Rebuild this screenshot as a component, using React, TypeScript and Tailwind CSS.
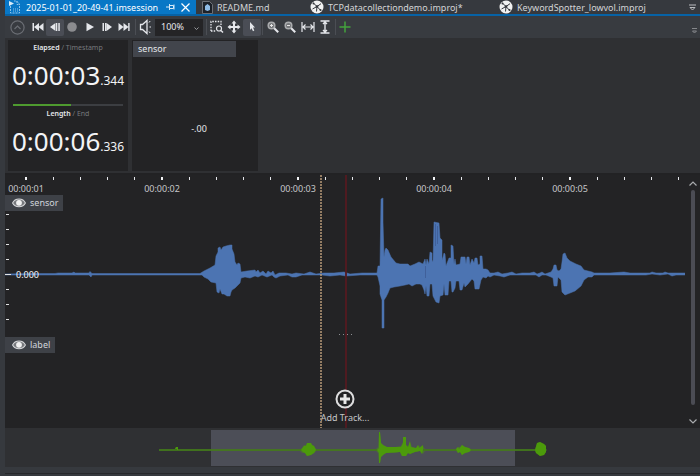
import type { ReactNode } from "react";

const SENSOR_TOP =
  "5,274 35,273.5 55,273.5 58,273 66,273 72,273 74,272 75,273 89,273 90,271.5 92,273.5 140,273.5 200,273.5 204,271 210,268 215,265 216,256 218,252 218,248 220,247 221,250 223,247 226,246 230,245 232,245 232,249 234,254 235,262 237,265 238,263 240,264 241,272 247,271 255,270 256,272 258,270 260,273 263,271 266,274 268,271 271,273 273,271 275,275 279,273 286,273 292,274 296,273 304,274 310,272 316,274 324,273 334,273 344,272 350,274 362,273 377,273 378,266 380,266 381,199 383,198 383,222 384,257 385,250 386,248 388,250 391,257 396,263 400,264 408,264 410,266 415,264 419,262 423,264 425,259 426,265 427,259 429,264 430,252 432,253 432,260 433,262 434,222 439,223 440,238 442,240 442,260 443,257 444,253 445,254 446,266 449,258 451,258 451,245 453,246 454,264 455,259 456,265 460,264 461,257 465,257 466,264 467,257 469,257 470,265 472,259 474,263 475,258 477,258 478,265 480,264 480,256 482,256 483,269 486,269 488,270 490,273 494,273 498,272 502,274 508,273 512,272 516,274 522,273 530,273 534,272 537,274 540,273 542,272 545,274 551,272 553,269 554,265 556,265 557,270 559,271 561,269 562,262 563,254 565,253 567,258 570,261 576,264 581,266 584,270 588,271 592,272 594,273 610,273 624,272 630,273 650,273 652,272 656,273 663,273 665,272 668,273 685,273";

const SENSOR_BOTTOM =
  "685,275 676,275 672,276 668,274 660,275 652,274 646,275 600,275 594,275 592,277 588,277 584,280 581,286 575,291 570,293 565,295 562,292 561,280 558,277 557,286 554,286 553,278 551,277 546,275 542,275 539,277 536,275 524,275 520,275 510,275 504,277 500,276 494,275 490,277 488,276 486,278 483,277 481,280 479,289 475,289 474,281 472,279 468,284 465,287 464,283 462,290 460,290 459,281 456,281 455,288 453,292 452,292 451,281 449,281 448,295 445,295 444,284 443,295 440,296 439,303 436,302 435,300 433,296 432,284 430,284 429,296 427,296 426,286 425,294 424,290 422,285 420,284 416,284 412,286 409,284 405,285 400,286 394,287 390,288 388,293 386,297 384,300 384,328 382,328 382,300 380,294 380,286 378,277 377,275 360,275 346,276 340,275 330,276 322,275 310,275 302,275 296,277 292,277 288,275 280,276 276,278 274,277 272,275 267,277 262,275 258,277 255,276 250,278 245,277 241,278 240,283 235,288 232,290 231,292 230,296 227,296 224,294 222,294 220,289 219,293 217,292 216,283 211,282 208,279 204,277 202,275 140,275 92,275 91,277 89,275 75,275 58,275 52,275 5,275";

const OVERVIEW_SHAPE =
  "159,449 175,449 176,447 178,447 178,449 301,449 304,445 306,445 307,443 311,443 312,445 314,446 316,449 376,449 378,447 379,432 380,432 381,443 383,445 386,447 395,447 401,446 403,442 403,437 406,437 406,445 408,447 410,442 412,447 416,448 419,445 420,448 423,446 425,449 456,449 458,447 460,447 462,445 465,447 469,448 471,449 535,449 537,443 540,442 544,444 546,446 546,452 544,455 540,456 536,453 535,451 471,451 469,452 465,453 462,455 460,452 458,453 456,451 425,451 423,454 420,451 415,452 410,454 408,453 406,456 402,456 400,452 395,453 386,453 383,455 381,457 380,463 379,463 378,453 376,451 316,451 314,453 311,455 307,456 305,453 302,453 300,451 159,451";

const TOOL = "grid h-[17px] place-items-center rounded-xs text-gray-200";

function Tool({ label, active, children }: { label: string; active?: boolean; children: ReactNode }) {
  return (
    <button type="button" aria-label={label} className={active ? `${TOOL} bg-[#4a4d55]` : TOOL}>
      <svg viewBox="0 0 16 16" className="size-4" fill="currentColor">
        {children}
      </svg>
    </button>
  );
}

function Separator() {
  return <span className="mx-px h-4 w-px shrink-0 bg-[#4b4e54]" />;
}

function ProjectIcon() {
  return (
    <svg viewBox="0 0 14 14" className="size-[14px] shrink-0">
      <circle cx="7" cy="7" r="6.5" fill="#f1f1f1" />
      <g stroke="#33363b" strokeWidth="1" fill="none">
        <path d="M7 6.500 3.300 3M7 6.500 11 3.700M7 6.500 2.500 9M7 6.500l3.700 4M7 6.500 6.500 11.500" />
      </g>
      <g fill="#33363b">
        <circle cx="7" cy="6.500" r="1.300" />
        <circle cx="3.500" cy="3.500" r="1" />
        <circle cx="10.500" cy="10" r="1" />
      </g>
    </svg>
  );
}

function Tab({ icon, title, className }: { icon: ReactNode; title: string; className: string }) {
  return (
    <button type="button" className={`flex shrink-0 items-center gap-1 pl-1.5 text-left ${className}`}>
      {icon}
      <span className="whitespace-nowrap">{title}</span>
    </button>
  );
}

function TabBar() {
  return (
    <nav className="flex h-4 items-center overflow-hidden border-b-2 border-[#0762a5] text-[9px] leading-[13px] text-[#d3d4d6]">
      <div className="flex h-full w-[191px] shrink-0 items-center bg-[#0877c6] pl-1 text-white">
        <button type="button" className="flex flex-1 items-center gap-1 text-left">
          <svg viewBox="0 0 13 14" className="h-[14px] w-[13px]" fill="none" stroke="#8fc4e8">
            <path d="M1.500 6v7h9V4l-3-3H5M8 1v3.500h3" strokeDasharray="2 1" />
            <path d="M0 1l5 2.500L0 6z" fill="#d9ecf8" stroke="none" />
            <path d="M4 9h5M4 11h5" strokeDasharray="1 1" />
          </svg>
          <span className="whitespace-nowrap">2025-01-01_20-49-41.imsession</span>
        </button>
        <button type="button" aria-label="Pin tab" className="mr-1.5">
          <svg viewBox="0 0 9 8" className="h-2 w-[9px]" fill="none" stroke="#d5e9f7">
            <path d="M0 4h3M3.500 1v6M3.500 2.500h4v3h-4M8 1.500v5" />
          </svg>
        </button>
        <button type="button" aria-label="Close tab" className="mr-1.5">
          <svg viewBox="0 0 9 9" className="size-[9px]" fill="none" stroke="white" strokeWidth="1.200">
            <path d="M.5.5l8 8M8.500.5l-8 8" />
          </svg>
        </button>
      </div>
      <Tab
        title="README.md"
        className="w-[108px]"
        icon={
          <svg viewBox="0 0 11 13" className="h-[13px] w-[11px]">
            <path d="M.5.500h7l3 3v9H.5z" fill="#1c2128" stroke="#6d7076" />
            <path d="M3 5l2.500-2L8 5v4l-2.500 1L3 9z" fill="#8fbce6" />
          </svg>
        }
      />
      <Tab title="TCPdatacollectiondemo.improj*" className="w-[189px]" icon={<ProjectIcon />} />
      <Tab title="KeywordSpotter_lowvol.improj" className="w-[160px]" icon={<ProjectIcon />} />
      <button type="button" aria-label="More tabs" className="mr-1 ml-auto">
        <svg viewBox="0 0 7 7" className="size-[7px]" fill="none" stroke="#b9bbbe">
          <path d="M0 1h7M1 3.500h5L3.500 6z" />
        </svg>
      </button>
    </nav>
  );
}

function Toolbar() {
  return (
    <div className="flex h-[22px] items-center bg-[#383b40]">
      <div className="grid w-6 place-items-center">
        <button type="button" aria-label="Collapse panel">
          <svg viewBox="0 0 15 15" className="size-[15px]" fill="none" stroke="#6b6e74" strokeWidth="1.200">
            <circle cx="7.500" cy="7.500" r="6.600" />
            <path d="M4.500 9l3-3 3 3" />
          </svg>
        </button>
      </div>
      <div className="mr-px grid w-[104px] grid-cols-6">
        <Tool label="Go to start">
          <path d="M2.500 4H4v8H2.500zM4 8l5-4v8zM8.500 8l5-4v8z" />
        </Tool>
        <Tool label="Step back" active>
          <path d="M3 8l5.500-4v8zM9 4h1.300v8H9zM11.300 4h1.500v8h-1.500z" />
        </Tool>
        <Tool label="Record">
          <circle cx="8" cy="8" r="4.800" fill="#8b8c8f" />
        </Tool>
        <Tool label="Play">
          <path d="M4.500 3.700L12 8l-7.500 4.300z" />
        </Tool>
        <Tool label="Step forward">
          <path d="M3.500 4H5v8H3.500zM6 4h1.300v8H6zM7.500 4l5.500 4-5.500 4z" />
        </Tool>
        <Tool label="Go to end">
          <path d="M2.500 4l5 4-5 4zM7.500 4l5 4-5 4zM12.200 4h1.400v8h-1.400z" />
        </Tool>
      </div>
      <Separator />
      <Tool label="Sound">
        <path d="M3.500 5.500h2l4.500-4v13l-4.500-4h-2z" fill="none" stroke="currentColor" strokeWidth="1.300" />
        <path d="M12 3.500l1.200-1.500M12.500 8H14M12 12.500l1.200 1.500" fill="none" stroke="currentColor" />
      </Tool>
      <div className="relative mx-0.5">
        <select
          aria-label="Playback speed"
          defaultValue="100%"
          className="block h-[17px] w-12 appearance-none bg-[#242426] pl-1.5 text-[9px] leading-4 text-gray-200"
        >
          <option>100%</option>
        </select>
        <svg viewBox="0 0 5 4" className="pointer-events-none absolute top-2 right-1 h-1 w-[5px]" fill="none" stroke="#96989c">
          <path d="M.5.500l2 2 2-2" />
        </svg>
      </div>
      <Separator />
      <div className="grid w-[53px] grid-cols-3">
        <Tool label="Select region">
          <path d="M2 12V2.500h10V7M2 12h5" fill="none" stroke="currentColor" strokeWidth="1.300" strokeDasharray="1.500 1.200" />
          <circle cx="10" cy="9.500" r="2.500" fill="none" stroke="currentColor" strokeWidth="1.200" />
          <path d="M12 11.500l2 2" stroke="currentColor" strokeWidth="1.500" />
        </Tool>
        <Tool label="Pan">
          <path d="M8 1.500l2.500 3H9v2.500h2.500V5.500l3 2.500-3 2.500V9H9v2.500h1.500l-2.500 3-2.500-3H7V9H4.500v1.500l-3-2.500 3-2.500V7H7V4.500H5.500z" />
        </Tool>
        <Tool label="Pointer" active>
          <path d="M6 3l5 5.500H9l1.300 3-1.300.7L7.500 9.300 6 11z" />
        </Tool>
      </div>
      <Separator />
      <div className="grid w-[70px] grid-cols-4">
        <Tool label="Zoom in">
          <circle cx="6.500" cy="6.500" r="3.300" fill="#77797c" stroke="#aaacae" strokeWidth="1.500" />
          <path d="M5 6.500h3M6.500 5v3" stroke="#e5e5e5" />
          <path d="M9.200 9.200l4 4" stroke="currentColor" strokeWidth="2" />
        </Tool>
        <Tool label="Zoom out">
          <circle cx="6.500" cy="6.500" r="3.300" fill="#77797c" stroke="#aaacae" strokeWidth="1.500" />
          <path d="M5 6.500h3" stroke="#e5e5e5" />
          <path d="M9.200 9.200l4 4" stroke="currentColor" strokeWidth="2" />
        </Tool>
        <Tool label="Fit width">
          <path d="M2 3v10M14 3v10M3 8h10M5.500 5.500L3 8l2.500 2.500M10.500 5.500L13 8l-2.500 2.500" fill="none" stroke="currentColor" strokeWidth="1.200" />
        </Tool>
        <Tool label="Fit height">
          <path d="M3.500 2h9M3.500 14h9M8 3v10M6 5l2-2 2 2M6 11l2 2 2-2" fill="none" stroke="currentColor" strokeWidth="1.400" />
        </Tool>
      </div>
      <Separator />
      <Tool label="Add">
        <path d="M8 2.500v11M2.500 8h11" fill="none" stroke="#43a33c" strokeWidth="1.500" />
      </Tool>
      <button type="button" aria-label="Toolbar options" className="mt-2 mr-[3px] ml-auto">
        <svg viewBox="0 0 5 6" className="h-1.5 w-[5px]" fill="none" stroke="#85878b">
          <path d="M0 .5h5M.5 3h4l-2 2z" />
        </svg>
      </button>
    </div>
  );
}

function Clock({ name, alt, main, fraction }: { name: string; alt: string; main: string; fraction: string }) {
  return (
    <div className="h-[64px]">
      <p className="text-center text-[7px] leading-4 text-[#77797d]">
        <span className="font-semibold text-gray-200">{name}</span> / {alt}
      </p>
      <p className="flex items-baseline justify-center leading-[38px] text-gray-100">
        <span className="text-[26px]">{main}</span>
        <span className="text-[12px]">{fraction}</span>
      </p>
    </div>
  );
}

function Panels() {
  return (
    <div className="flex h-[137px] gap-1 border-b-2 border-[#222224] bg-[#2f3033] px-[3px] pt-0.5 pb-0.5">
      <section className="w-[120px] bg-[#232325] px-[5px]">
        <Clock name="Elapsed" alt="Timestamp" main="0:00:03" fraction=".344" />
        <div className="h-0.5 bg-[#3c3e42]">
          <div className="h-full w-[53%] bg-[#4e9a2f]" />
        </div>
        <Clock name="Length" alt="End" main="0:00:06" fraction=".336" />
      </section>
      <section className="flex w-[126px] flex-col bg-[#232325] p-px text-[9px] text-gray-200">
        <h2 className="h-4 w-[103px] bg-[#42454c] pl-[5px] leading-4">sensor</h2>
        <p className="mt-16 pl-2 text-center leading-4">-.00</p>
      </section>
    </div>
  );
}

const MARKS = ["00:00:01", "00:00:02", "00:00:03", "00:00:04", "00:00:05", ""];

function Ruler() {
  return (
    <div className="flex h-5 overflow-hidden pt-0.5">
      {MARKS.map((mark, i) => (
        <div key={i} className={i === 0 ? "-ml-[47px] w-[136px] shrink-0" : "w-[136px] shrink-0"}>
          <div className="grid h-[5px] grid-cols-5 justify-items-center">
            {[0, 1, 2, 3, 4].map((n) => (
              <span key={n} className={n === 2 ? "h-[3px] w-0.5 bg-gray-100" : "h-[3px] w-px bg-gray-200"} />
            ))}
          </div>
          <p className="text-center text-[9px] leading-[13px] text-[#c6c7c9]">{mark}</p>
        </div>
      ))}
    </div>
  );
}

function TrackBadge({ name }: { name: string }) {
  return (
    <button type="button" className="flex h-4 items-center gap-1 bg-[#3e4147] pr-[5px] pl-[7px] text-[9px] leading-4 text-gray-300">
      <svg viewBox="0 0 14 10" className="h-2.5 w-3.5">
        <path d="M.6 5c2.400-5.300 10.400-5.300 12.800 0-2.400 5-10.400 5-12.800 0z" fill="#77797d" stroke="#d5d6d8" strokeWidth="1.100" />
        <circle cx="7" cy="4.800" r="2.900" fill="#f1f1f1" />
      </svg>
      {name}
    </button>
  );
}

function SensorTrack() {
  return (
    <section className="relative h-[140px]">
      <svg viewBox="5 195 680 140" preserveAspectRatio="none" className="block h-full w-full">
        <polygon points={`${SENSOR_TOP} ${SENSOR_BOTTOM}`} fill="#4c74b2" stroke="#4c74b2" strokeWidth=".5" />
        <path d="M435.500 224v22M437.500 226v18M425.500 266v12" stroke="#40609a" strokeWidth="1" />
      </svg>
      <div className="absolute top-0 left-0">
        <TrackBadge name="sensor" />
      </div>
      <svg viewBox="0 0 12 140" className="absolute top-0 left-0 h-full w-3" stroke="#e1e2e4">
        <path d="M1 19.500h3M1 34.500h3M1 49.500h3M1 64.500h3M1 94.500h3M1 109.500h3M1 124.500h3M0 79.500h6" />
      </svg>
      <span className="absolute top-[72px] left-[11px] text-[9px] leading-4 text-gray-100">0.000</span>
    </section>
  );
}

function Timeline() {
  return (
    <main className="flex h-[253px] bg-[#232325]">
      <div className="relative min-w-0 flex-1">
        <Ruler />
        <SensorTrack />
        <div className="flex h-0.5 -translate-y-px justify-center gap-[3px]">
          {[0, 1, 2, 3].map((n) => (
            <span key={n} className="size-px bg-[#8d8f93]" />
          ))}
        </div>
        <TrackBadge name="label" />
        <div className="absolute inset-y-0 left-1/2 w-0.5 bg-[#541a20]/90" />
        <button type="button" className="relative mx-auto mt-9 flex flex-col items-center gap-px text-[9px] leading-4 text-[#c6c7c9]">
          <svg viewBox="0 0 20 20" className="size-5">
            <circle cx="10" cy="10" r="8.500" fill="#232325" stroke="#dededf" strokeWidth="2" />
            <path d="M10 5v10M5 10h10" stroke="#e8e8e8" strokeWidth="3" />
          </svg>
          Add Track...
        </button>
        <svg viewBox="0 0 2 253" preserveAspectRatio="none" className="absolute top-0 left-[46.300%] h-full w-0.5">
          <path d="M1 0v253" stroke="#b99b78" strokeWidth="1.500" strokeDasharray="2 1" />
        </svg>
      </div>
      <div className="flex w-[15px] flex-col items-center pt-1.5 pb-1">
        <button type="button" aria-label="Scroll up">
          <svg viewBox="0 0 8 5" className="h-[5px] w-2" fill="none" stroke="#a9abae" strokeWidth="1.200">
            <path d="M.5 4.500L4 1l3.500 3.500" />
          </svg>
        </button>
        <div className="mt-1 mb-3.5 w-1 flex-1 rounded-full bg-[#4b4c54]" />
        <button type="button" aria-label="Scroll down">
          <svg viewBox="0 0 8 5" className="h-[5px] w-2" fill="none" stroke="#a9abae" strokeWidth="1.200">
            <path d="M.5.500L4 4 7.500.500" />
          </svg>
        </button>
      </div>
    </main>
  );
}

function Overview() {
  return (
    <footer className="relative h-[39px] bg-[#2f3033]">
      <div className="absolute top-0.5 bottom-px left-[29.700%] w-[43.700%] bg-[#4c4e57]" />
      <svg viewBox="5 428 695 39" preserveAspectRatio="none" className="relative block h-full w-full">
        <path d="M159 450h388" stroke="#3d5b2b" strokeWidth="1.500" />
        <polygon points={OVERVIEW_SHAPE} fill="#4c9a0b" fillOpacity=".45" />
        <path
          d="M175 449l1-2h2v3h-1v-1zM301 450l3-4h2l1-3h4l1 2 2 1 2 4-2 3-3 2-4 1-2-3-2-1zM377 450l2-2v-16h1l1 11 2 2 4 2h14l2-4v-6h3v8l2 2 2-6 1 6 5 1 2-3 1 3 4-3v5l-1 4-2-3-5 1-5 2-2-1-2 3h-4l-2-4-14 1-3 2-2 2-1 6h-1v-10zM456 449l2-2 1 2 3-4 3 2 4 1 2 2-2 2-4 1-3 2-2-3-2 1zM535 450l2-7 3-1 4 2 2 2v6l-2 3-4 1-4-3z"
          fill="#4c9a0b"
        />
      </svg>
    </footer>
  );
}

export default function App() {
  return (
    <div className="min-h-screen bg-[#36393e] pl-[5px] font-['Noto_Sans','Open_Sans',sans-serif]">
      <TabBar />
      <Toolbar />
      <Panels />
      <Timeline />
      <Overview />
      <div className="mt-1.5 h-px bg-[#27282b]" />
    </div>
  );
}
